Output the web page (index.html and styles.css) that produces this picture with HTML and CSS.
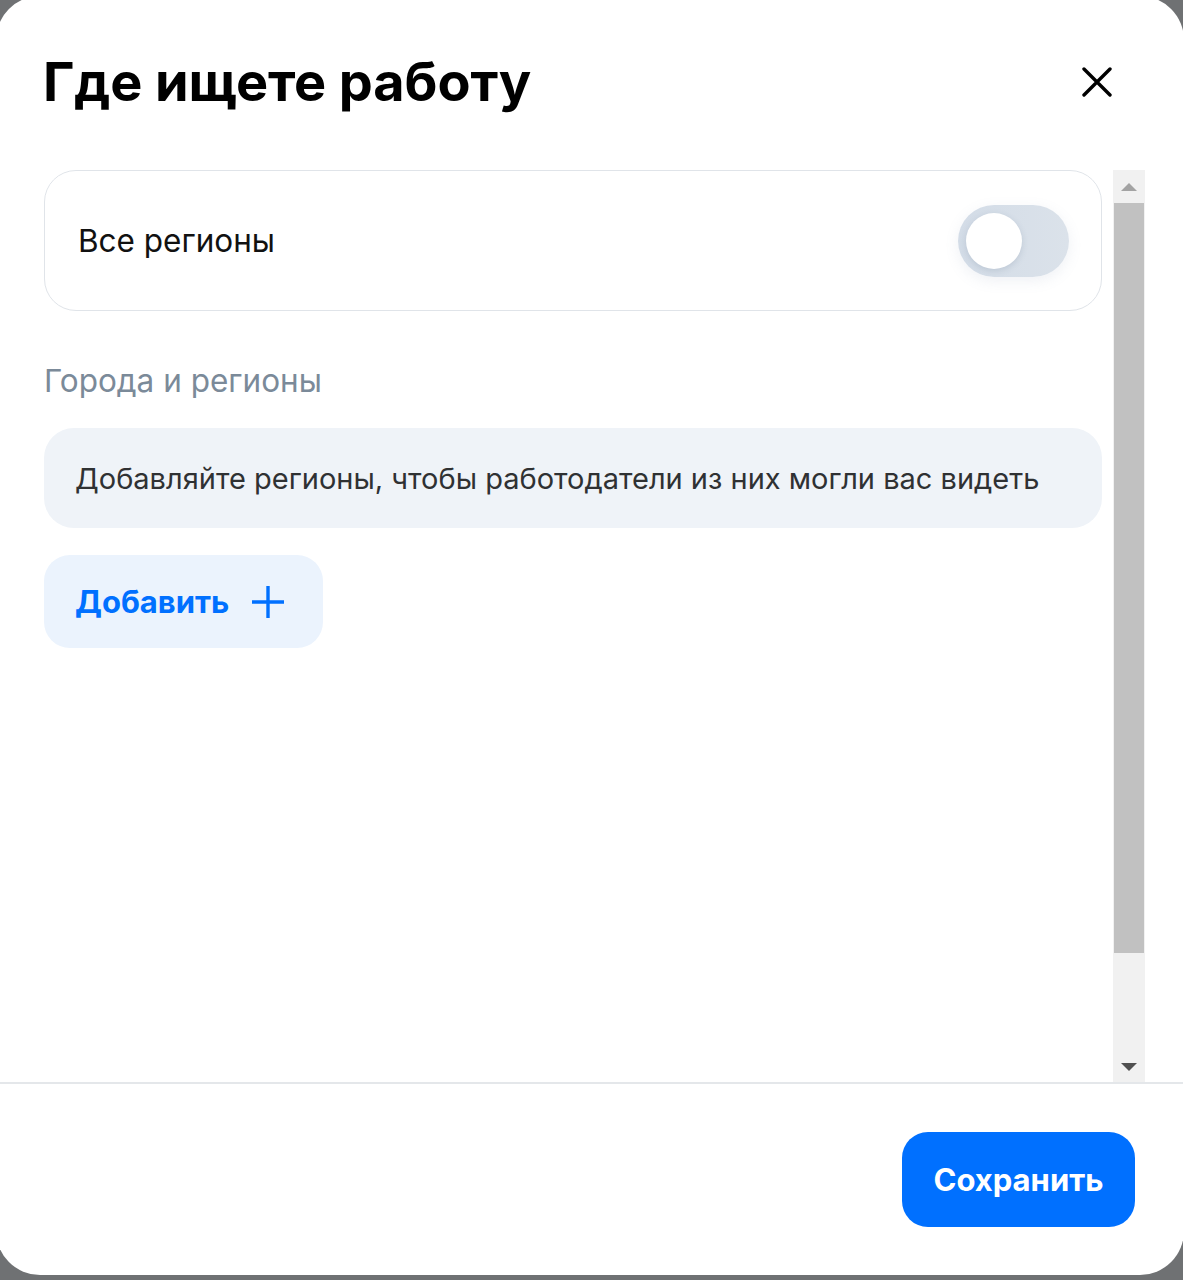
FILE: index.html
```html
<!DOCTYPE html>
<html lang="ru">
<head>
<meta charset="utf-8">
<title>Где ищете работу</title>
<link rel="stylesheet" href="styles.css">
</head>
<body>
<div class="modal">
  <header class="head">
    <h1 class="title">Где ищете работу</h1>
    <button class="close" aria-label="Закрыть">
      <svg width="30" height="30" viewBox="0 0 30 30"><path d="M2 2 L28 28 M28 2 L2 28" stroke="#000" stroke-width="3.4" stroke-linecap="round" fill="none"/></svg>
    </button>
  </header>
  <div class="scroll-area">
    <div class="content">
      <div class="card">
        <span class="card-text">Все регионы</span>
        <span class="toggle"><span class="knob"></span></span>
      </div>
      <div class="label">Города и регионы</div>
      <div class="info">Добавляйте регионы, чтобы работодатели из них могли вас видеть</div>
      <button class="add">Добавить
        <svg width="34" height="34" viewBox="0 0 34 34"><path d="M17 1 V33 M1 17 H33" stroke="#0070ff" stroke-width="3.4" fill="none"/></svg>
      </button>
    </div>
    <div class="scrollbar">
      <div class="sb-btn"><span class="tri-up"></span></div>
      <div class="sb-thumb"></div>
      <div class="sb-track"></div>
      <div class="sb-btn"><span class="tri-down"></span></div>
    </div>
  </div>
  <footer class="foot">
    <button class="save">Сохранить</button>
  </footer>
</div>
</body>
</html>
```
FILE: styles.css
```css
* { box-sizing: border-box; }
html, body { margin: 0; padding: 0; }
body {
  background: #6f7173;
  height: 1280px;
  overflow: hidden;
  font-family: Inter, "Noto Sans", sans-serif;
}
.modal {
  margin: -4px 0 0 -4px;
  width: 1188px;
  height: 1279px;
  background: #fff;
  border-radius: 44px;
  display: flex;
  flex-direction: column;
  overflow: hidden;
}
.head {
  height: 174px;
  flex: none;
  display: flex;
  justify-content: space-between;
  align-items: flex-start;
  padding: 53px 72px 0 47px;
}
.title {
  margin: 0;
  font-size: 54px;
  line-height: 66px;
  font-weight: 700;
  color: #000;
  letter-spacing: -0.1px;
}
.close {
  border: 0;
  background: none;
  padding: 0;
  margin-top: 18px;
  width: 30px;
  height: 30px;
  display: block;
}
.close svg { display: block; }
.scroll-area {
  flex: none;
  height: 912px;
  display: flex;
  padding-left: 48px;
}
.content {
  width: 1058px;
  margin-right: 11px;
  display: flex;
  flex-direction: column;
  align-items: flex-start;
}
.card {
  width: 100%;
  height: 141px;
  border: 1.5px solid #e0e4e9;
  border-radius: 32px;
  display: flex;
  align-items: center;
  justify-content: space-between;
  padding: 0 32px 0 33px;
}
.card-text {
  font-size: 31.5px;
  color: #111;
}
.toggle {
  width: 111px;
  height: 72px;
  border-radius: 36px;
  background: linear-gradient(90deg, #d3dce7 0%, #dbe2ea 100%);
  box-shadow: 0 4px 14px rgba(120, 140, 170, 0.12);
  position: relative;
  display: block;
}
.knob {
  position: absolute;
  left: 8px;
  top: 8px;
  width: 56px;
  height: 56px;
  border-radius: 50%;
  background: #fff;
  box-shadow: 0 2px 6px rgba(80, 100, 130, 0.18);
}
.label {
  margin-top: 50px;
  font-size: 31.5px;
  line-height: 40px;
  color: #7b8a99;
}
.info {
  margin-top: 27px;
  width: 100%;
  height: 100px;
  border-radius: 30px;
  background: #eff3f8;
  display: flex;
  align-items: center;
  padding-left: 31px;
  font-size: 29px;
  color: #2f3133;
}
.add {
  margin-top: 27px;
  height: 93px;
  width: 279px;
  border: 0;
  border-radius: 26px;
  background: #ebf3fd;
  color: #0070ff;
  font-family: inherit;
  font-size: 31px;
  font-weight: 700;
  display: flex;
  align-items: center;
  gap: 22px;
  padding: 0 0 0 31px;
}
.add svg { display: block; }
.scrollbar {
  width: 32px;
  display: flex;
  flex-direction: column;
  background: #f1f1f1;
}
.sb-btn {
  height: 33px;
  flex: none;
  display: flex;
  align-items: center;
  justify-content: center;
}
.sb-thumb {
  height: 750px;
  flex: none;
  background: #c1c1c1;
  margin: 0 1px;
}
.sb-track { flex: 1; }
.tri-up {
  width: 0; height: 0;
  border-left: 8px solid transparent;
  border-right: 8px solid transparent;
  border-bottom: 8px solid #a3a3a3;
}
.tri-down {
  width: 0; height: 0;
  border-left: 8px solid transparent;
  border-right: 8px solid transparent;
  border-top: 8px solid #505050;
  margin-top: 2px;
}
.foot {
  flex: 1;
  border-top: 2px solid #e4e7ea;
  display: flex;
  justify-content: flex-end;
  align-items: flex-start;
  padding: 48px 49px 0 0;
}
.save {
  width: 233px;
  height: 95px;
  border: 0;
  border-radius: 26px;
  background: #0070ff;
  color: #fff;
  font-family: inherit;
  font-size: 31px;
  font-weight: 700;
}
```
